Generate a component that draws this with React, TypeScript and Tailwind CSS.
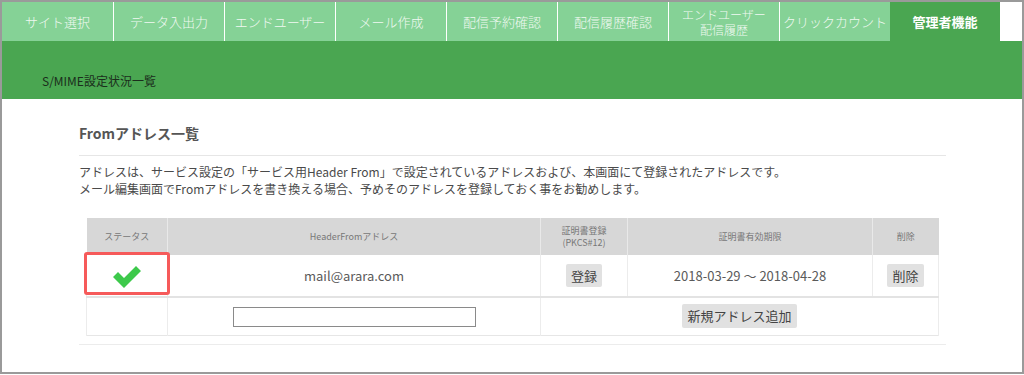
import { Fragment } from 'react'

const tabs = [
  'サイト選択',
  'データ入出力',
  'エンドユーザー',
  'メール作成',
  '配信予約確認',
  '配信履歴確認',
  'エンドユーザー\n配信履歴',
  'クリックカウント',
]

const font = { fontFamily: '"Noto Sans CJK JP", "Noto Sans", sans-serif' }

function CheckIcon() {
  return (
    <svg width="32" height="24" viewBox="0 0 32 24">
      <path d="M2 12 L7 7 L13 13 L25 1 L30 6 L13 23 Z" fill="#3dc94b" strokeLinejoin="round" />
    </svg>
  )
}

export default function App() {
  return (
    <div className="h-[375px] w-[1024px] overflow-hidden bg-white" style={font}>
      <div className="flex h-[374px] w-[1024px] flex-col border-[2px] border-[#9a9a9a]">
        {/* tabs */}
        <div className="flex h-[39px] shrink-0">
          {tabs.map((t, i) => (
            <div
              key={t}
              className={`flex w-[111px] items-center justify-center whitespace-pre-line bg-[#85d296] text-center font-light text-[#f0f9f2] ${
                i > 0 ? 'border-l border-white' : ''
              } ${t.includes('\n') ? 'text-[12px] leading-[15px]' : 'text-[13px]'}`}
            >
              {t.split('\n').map((line, j) => (
                <Fragment key={j}>
                  {j > 0 && <br />}
                  {line}
                </Fragment>
              ))}
            </div>
          ))}
          <div className="flex w-[110px] items-center justify-center bg-[#4aa651] text-[13px] font-bold text-white">
            管理者機能
          </div>
          <div className="flex-1 bg-white" />
        </div>

        {/* title band */}
        <div className="flex h-[58px] shrink-0 items-end bg-[#4aa651] pb-[9px] pl-[40px] text-[12px] text-[#1b2e1c]">
          S/MIME設定状況一覧
        </div>

        {/* content */}
        <div className="flex flex-col pl-[77px] pr-[76px] pt-[24px]">
          <h2 className="text-[14px] font-bold leading-[20px] text-[#555]">Fromアドレス一覧</h2>
          <div className="mt-[12px] border-t border-[#e6e6e6]" />
          <p className="mt-[7px] text-[12px] leading-[17px] text-[#4a4a4a]">
            アドレスは、サービス設定の「サービス用Header From」で設定されているアドレスおよび、本画面にて登録されたアドレスです。
            <br />
            メール編集画面でFromアドレスを書き換える場合、予めそのアドレスを登録しておく事をお勧めします。
          </p>

          <div className="mt-[21px] px-[7px]">
            <table className="w-[853px] border-collapse text-[#5a5a5a]">
              <thead>
                <tr className="h-[37px] bg-[#d7d7d7] text-[9px] font-normal leading-[12px] text-[#777]">
                  <th className="w-[81px] border-r border-[#e9e9e9] font-normal">ステータス</th>
                  <th className="w-[373px] border-r border-[#e9e9e9] font-normal">HeaderFromアドレス</th>
                  <th className="w-[87px] border-r border-[#e9e9e9] font-normal">
                    証明書登録
                    <br />
                    (PKCS#12)
                  </th>
                  <th className="w-[245px] border-r border-[#e9e9e9] font-normal">証明書有効期限</th>
                  <th className="font-normal">削除</th>
                </tr>
              </thead>
              <tbody className="text-[13px]">
                <tr className="h-[42px] border-b-[2px] border-[#e3e3e3]">
                  <td className="relative border-l border-r border-[#ececec] p-0">
                    <div className="absolute left-[-3px] right-[-3px] top-[-3px] bottom-[1px] rounded-[3px] border-[3px] border-[#f65a5a]" />
                    <div className="flex justify-center pt-[2px]">
                      <CheckIcon />
                    </div>
                  </td>
                  <td className="border-r border-[#ececec] text-center">mail@arara.com</td>
                  <td className="border-r border-[#ececec] text-center">
                    <button className="rounded-[2px] bg-[#e1e1e1] px-[5px] py-[3px] text-[13px] leading-[17px] text-[#444]">登録</button>
                  </td>
                  <td className="border-r border-[#ececec] text-center">2018-03-29 ～ 2018-04-28</td>
                  <td className="border-r border-[#ececec] text-center">
                    <button className="rounded-[2px] bg-[#e1e1e1] px-[5px] py-[3px] text-[13px] leading-[17px] text-[#444]">削除</button>
                  </td>
                </tr>
                <tr className="h-[38px] border-b border-[#e6e6e6]">
                  <td className="border-l border-r border-[#ececec]" />
                  <td className="border-r border-[#ececec] text-center">
                    <input className="h-[20px] w-[243px] border border-[#8a8a8a] bg-white align-middle" />
                  </td>
                  <td colSpan={3} className="border-r border-[#ececec] text-center">
                    <button className="rounded-[2px] bg-[#e1e1e1] px-[5px] py-[3px] text-[13px] leading-[18px] text-[#444]">
                      新規アドレス追加
                    </button>
                  </td>
                </tr>
              </tbody>
            </table>
          </div>
          <div className="mt-[8px] border-t border-[#ececec]" />
        </div>
      </div>
    </div>
  )
}
